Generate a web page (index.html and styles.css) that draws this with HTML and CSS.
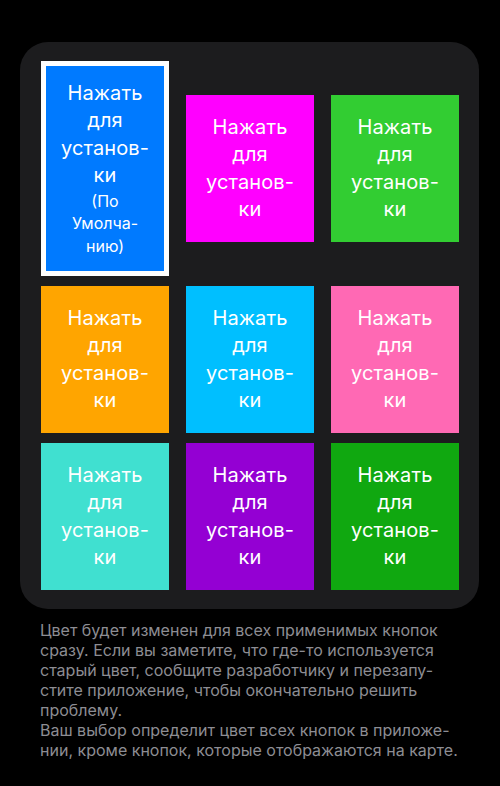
FILE: index.html
```html
<!DOCTYPE html>
<html lang="ru">
<head>
<meta charset="utf-8">
<title>Цвет кнопок</title>
<link rel="stylesheet" href="styles.css">
</head>
<body>
  <main class="screen">
    <section class="palette">
      <button class="swatch selected c-blue">
        <span class="label">Нажать<br>для<br>установ-<br>ки</span>
        <span class="note">(По<br>Умолча-<br>нию)</span>
      </button>
      <button class="swatch c-magenta"><span class="label">Нажать<br>для<br>установ-<br>ки</span></button>
      <button class="swatch c-lime"><span class="label">Нажать<br>для<br>установ-<br>ки</span></button>

      <button class="swatch c-orange"><span class="label">Нажать<br>для<br>установ-<br>ки</span></button>
      <button class="swatch c-sky"><span class="label">Нажать<br>для<br>установ-<br>ки</span></button>
      <button class="swatch c-pink"><span class="label">Нажать<br>для<br>установ-<br>ки</span></button>

      <button class="swatch c-turquoise"><span class="label">Нажать<br>для<br>установ-<br>ки</span></button>
      <button class="swatch c-violet"><span class="label">Нажать<br>для<br>установ-<br>ки</span></button>
      <button class="swatch c-green"><span class="label">Нажать<br>для<br>установ-<br>ки</span></button>
    </section>

    <p class="hint">Цвет будет изменен для всех применимых кнопок<br>сразу. Если вы заметите, что где-то используется<br>старый цвет, сообщите разработчику и перезапу-<br>стите приложение, чтобы окончательно решить<br>проблему.<br>Ваш выбор определит цвет всех кнопок в приложе-<br>нии, кроме кнопок, которые отображаются на карте.</p>
  </main>
</body>
</html>
```

FILE: styles.css
```css
html, body {
  margin: 0;
  padding: 0;
  background: #000;
}

body {
  font-family: Inter, "Noto Sans", "DejaVu Sans", sans-serif;
  color: #fff;
  -webkit-font-smoothing: antialiased;
}

.screen {
  width: 500px;
  height: 786px;
  padding-top: 42px;
  box-sizing: border-box;
}

/* rounded panel holding the 3x3 colour grid */
.palette {
  margin-left: 20px;
  width: 459px;
  height: 567px;
  box-sizing: border-box;
  padding: 19px 20px 19px 21px;
  background: #1c1c1e;
  border-radius: 28px;
  display: grid;
  grid-template-columns: repeat(3, 128px);
  grid-template-rows: 215px 147px 147px;
  column-gap: 17px;
  row-gap: 10px;
  align-items: center;
}

.swatch {
  width: 128px;
  height: 147px;
  margin: 0;
  padding: 0;
  border: 0;
  box-sizing: border-box;
  display: flex;
  flex-direction: column;
  align-items: center;
  justify-content: center;
  font-family: inherit;
  color: #fff;
  text-align: center;
  cursor: pointer;
}

.swatch.selected {
  height: 215px;
  border: 5px solid #fff;
}

.label {
  display: block;
  font-size: 20px;
  line-height: 27.5px;
  font-weight: 400;
  letter-spacing: 0.1px;
}

.note {
  display: block;
  font-size: 16px;
  line-height: 22.5px;
  font-weight: 400;
}

.c-blue      { background: #007aff; }
.c-magenta   { background: #ff00ff; }
.c-lime      { background: #32cd32; }
.c-orange    { background: #ffa500; }
.c-sky       { background: #00bfff; }
.c-pink      { background: #ff69b4; }
.c-turquoise { background: #40e0d0; }
.c-violet    { background: #9400d3; }
.c-green     { background: #10a810; }

.hint {
  margin: 11px 0 0 40px;
  font-size: 16px;
  line-height: 20px;
  color: #8d8d93;
  white-space: nowrap;
}
```
